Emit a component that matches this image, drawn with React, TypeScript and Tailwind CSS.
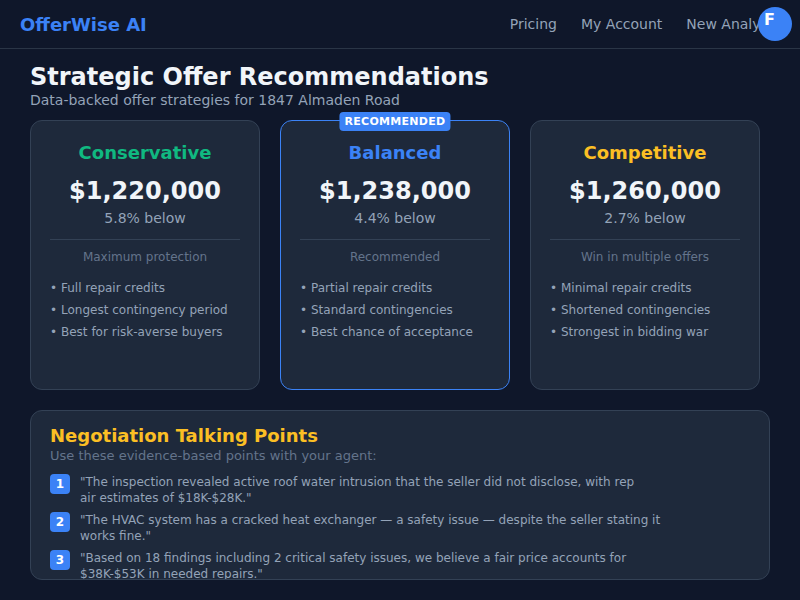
import React from "react";

type Strategy = {
  name: string;
  tone: string;
  price: string;
  delta: string;
  tagline: string;
  points: string[];
  recommended?: boolean;
};

const STRATEGIES: Strategy[] = [
  {
    name: "Conservative",
    tone: "text-[#10b981]",
    price: "$1,220,000",
    delta: "5.8% below",
    tagline: "Maximum protection",
    points: ["Full repair credits", "Longest contingency period", "Best for risk-averse buyers"],
  },
  {
    name: "Balanced",
    tone: "text-[#3b82f6]",
    price: "$1,238,000",
    delta: "4.4% below",
    tagline: "Recommended",
    points: ["Partial repair credits", "Standard contingencies", "Best chance of acceptance"],
    recommended: true,
  },
  {
    name: "Competitive",
    tone: "text-[#fbbf24]",
    price: "$1,260,000",
    delta: "2.7% below",
    tagline: "Win in multiple offers",
    points: ["Minimal repair credits", "Shortened contingencies", "Strongest in bidding war"],
  },
];

const TALKING_POINTS: string[][] = [
  [
    "\"The inspection revealed active roof water intrusion that the seller did not disclose, with rep",
    "air estimates of $18K-$28K.\"",
  ],
  [
    "\"The HVAC system has a cracked heat exchanger \u2014 a safety issue \u2014 despite the seller stating it",
    "works fine.\"",
  ],
  [
    "\"Based on 18 findings including 2 critical safety issues, we believe a fair price accounts for",
    "$38K-$53K in needed repairs.\"",
  ],
];

function StrategyCard({ s }: { s: Strategy }) {
  return (
    <div
      className={`relative flex h-[270px] flex-col rounded-xl border bg-[#1e293b] px-[19px] pt-5 ${
        s.recommended ? "border-[#3b82f6]" : "border-[#334155]"
      }`}
    >
      {s.recommended && (
        <div className="absolute left-1/2 top-[-9px] -translate-x-1/2 rounded-[4px] bg-[#3b82f6] px-[5px] text-[11px] font-bold leading-[19px] tracking-[0.3px] text-white">
          RECOMMENDED
        </div>
      )}
      <div className={`text-center text-[18px] font-bold leading-6 ${s.tone}`}>{s.name}</div>
      <div className="mt-[10px] text-center text-[24px] font-bold leading-8 text-[#f1f5f9]">{s.price}</div>
      <div className="mt-[1px] text-center text-[14px] leading-5 text-[#94a3b8]">{s.delta}</div>
      <div className="mt-[11px] border-t border-[#334155] pt-[9px] text-center text-[12px] leading-4 text-[#64748b]">
        {s.tagline}
      </div>
      <ul className="mt-3">
        {s.points.map((p) => (
          <li key={p} className="flex text-[12px] leading-[22px] text-[#94a3b8]">
            <span className="w-[11px] shrink-0">•</span>
            {p}
          </li>
        ))}
      </ul>
    </div>
  );
}

export default function App() {
  return (
    <div className="min-h-[600px] bg-[#0f172a] font-['DejaVu_Sans',sans-serif]">
      <header className="relative flex h-[49px] items-center justify-between border-b border-[#2a3546] pl-5">
        <div className="text-[18px] font-bold text-[#3b82f6]">OfferWise AI</div>
        <nav className="flex gap-6 pr-[21px] text-[14px] text-[#94a3b8]">
          <span>Pricing</span>
          <span>My Account</span>
          <span className="whitespace-nowrap">New Analysis</span>
        </nav>
        <div className="absolute right-[8px] top-[7px] h-[34px] w-[34px] rounded-full bg-[#3b82f6] pl-[6px] pt-[3px] text-[16px] font-bold leading-5 text-white">
          F
        </div>
      </header>

      <main className="px-[30px] pt-[13px]">
        <h1 className="text-[24px] font-bold leading-[30px] text-[#f1f5f9]">Strategic Offer Recommendations</h1>
        <p className="text-[14px] leading-[16px] text-[#94a3b8]">Data-backed offer strategies for 1847 Almaden Road</p>

        <div className="mt-[12px] grid w-[730px] grid-cols-3 gap-5">
          {STRATEGIES.map((s) => (
            <StrategyCard key={s.name} s={s} />
          ))}
        </div>

        <section className="mt-5 h-[170px] overflow-hidden rounded-xl border border-[#334155] bg-[#1e293b] px-[19px] pt-[13px]">
          <h2 className="text-[18px] font-bold leading-6 text-[#fbbf24]">Negotiation Talking Points</h2>
          <p className="text-[13px] leading-[16px] text-[#64748b]">Use these evidence-based points with your agent:</p>
          <ol className="mt-[10px] flex flex-col gap-[6px]">
            {TALKING_POINTS.map((lines, i) => (
              <li key={i} className="flex gap-[10px]">
                <span className="flex h-5 w-5 shrink-0 items-center justify-center rounded-[4px] bg-[#3b82f6] text-[12px] font-bold text-white">
                  {i + 1}
                </span>
                <span className="text-[12px] leading-[16px] text-[#94a3b8]">
                  {lines[0]}
                  <br />
                  {lines[1]}
                </span>
              </li>
            ))}
          </ol>
        </section>
      </main>
    </div>
  );
}
